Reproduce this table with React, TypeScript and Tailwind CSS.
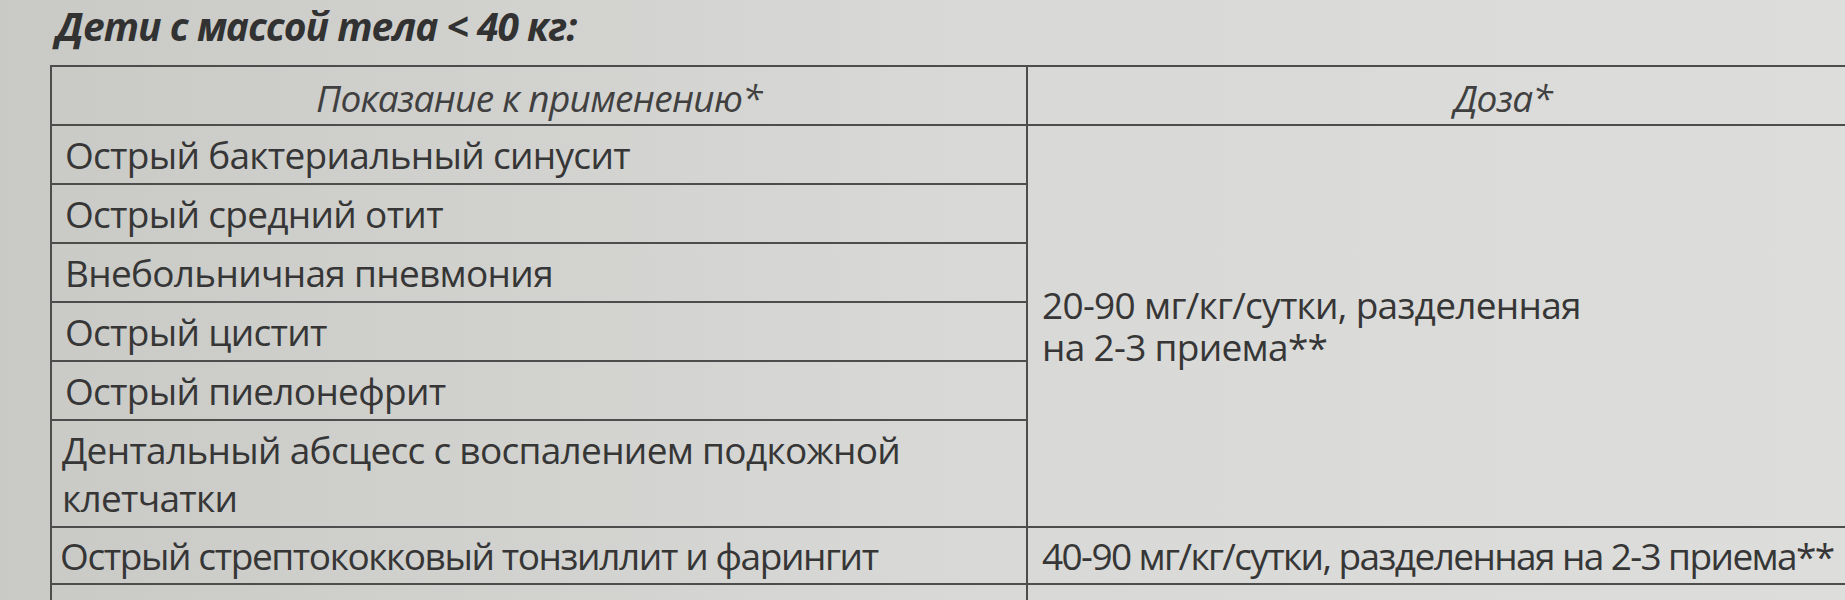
import React from "react";

const indications = [
  "Острый бактериальный синусит",
  "Острый средний отит",
  "Внебольничная пневмония",
  "Острый цистит",
  "Острый пиелонефрит",
];

export default function App() {
  return (
    <div
      className="h-[600px] w-full overflow-hidden bg-linear-to-r from-[#c9c9c6] via-[#d8d8d6] to-[#dddddb] text-[#363636]"
      style={{ fontFamily: '"Open Sans", "Noto Sans", sans-serif' }}
    >
      {/* Heading */}
      <div className="h-[65px] pl-[56px] pt-[3px]">
        <h2 className="text-[39px] leading-[45px] font-bold italic tracking-[-1px] text-[#323232]">
          Дети с массой тела &lt; 40 кг:
        </h2>
      </div>

      {/* Dosage table */}
      <table className="ml-[50px] w-[1930px] table-fixed border-collapse text-[37px] leading-[45px] tracking-[-0.7px]">
        <colgroup>
          <col className="w-[976px]" />
          <col />
        </colgroup>
        <thead>
          <tr className="h-[59px]">
            <th className="border-2 border-[#4d4d4d] pt-[4px] text-center align-middle font-normal italic text-[#404040]">
              Показание к применению*
            </th>
            <th className="border-2 border-[#4d4d4d] pt-[4px] text-center align-middle font-normal italic text-[#404040]">
              Доза*
            </th>
          </tr>
        </thead>
        <tbody>
          {indications.map((name, i) => (
            <tr key={name} className="h-[59px]">
              <td className="border-2 border-[#4d4d4d] pl-[13px] align-middle">
                <span>{name}</span>
              </td>
              {i === 0 && (
                <td rowSpan={6} className="border-2 border-[#4d4d4d] pl-[14px] align-middle leading-[42px]">
                  <p>20-90 мг/кг/сутки, разделенная</p>
                  <p>на 2-3 приема**</p>
                </td>
              )}
            </tr>
          ))}
          <tr className="h-[107px]">
            <td className="border-2 border-[#4d4d4d] pl-[10px] align-middle leading-[48px]">
              <p>Дентальный абсцесс с воспалением подкожной</p>
              <p>клетчатки</p>
            </td>
          </tr>
          <tr className="h-[57px]">
            <td className="border-2 border-[#4d4d4d] pl-[8px] align-middle tracking-[-1.4px]">
              <span>Острый стрептококковый тонзиллит и фарингит</span>
            </td>
            <td className="border-2 border-[#4d4d4d] pl-[14px] align-middle whitespace-nowrap tracking-[-1.6px]">
              <span>40-90 мг/кг/сутки, разделенная на 2-3 приема**</span>
            </td>
          </tr>
          <tr className="h-[59px]">
            <td className="border-2 border-[#4d4d4d]">&nbsp;</td>
            <td className="border-2 border-[#4d4d4d]">&nbsp;</td>
          </tr>
        </tbody>
      </table>
    </div>
  );
}
